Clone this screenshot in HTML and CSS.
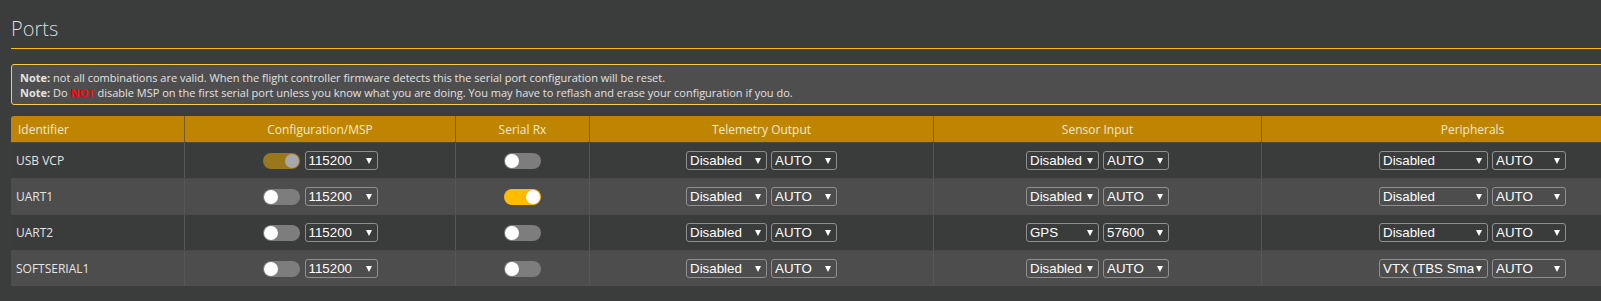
FILE: index.html
```html
<!doctype html>
<html lang="en">
<head>
  <meta charset="utf-8">
  <meta name="viewport" content="width=device-width, initial-scale=1">
  <title>Ports</title>
  <link rel="stylesheet" href="styles.css">
</head>
<body>
  <div class="tab">
    <div class="tabTitle">Ports</div>

    <div class="note">
      <p><b>Note:</b> not all combinations are valid. When the flight controller firmware detects this the serial port configuration will be reset.</p>
      <p><b>Note:</b> Do <span class="warn">NOT</span> disable MSP on the first serial port unless you know what you are doing. You may have to reflash and erase your configuration if you do.</p>
    </div>

    <div class="ports">
      <div class="row head">
        <div class="cell ident">Identifier</div>
        <div class="cell">Configuration/MSP</div>
        <div class="cell">Serial Rx</div>
        <div class="cell">Telemetry Output</div>
        <div class="cell">Sensor Input</div>
        <div class="cell">Peripherals</div>
      </div>

      <div class="row">
        <div class="cell ident">USB VCP</div>
        <div class="cell"><span class="toggle locked"></span><span class="select w73"><span class="val">115200</span><span class="arrow"></span></span></div>
        <div class="cell"><span class="toggle"></span></div>
        <div class="cell"><span class="select w81"><span class="val">Disabled</span><span class="arrow"></span></span><span class="select w66"><span class="val">AUTO</span><span class="arrow"></span></span></div>
        <div class="cell"><span class="select w73"><span class="val">Disabled</span><span class="arrow"></span></span><span class="select w66"><span class="val">AUTO</span><span class="arrow"></span></span></div>
        <div class="cell"><span class="select w109"><span class="val">Disabled</span><span class="arrow"></span></span><span class="select w74"><span class="val">AUTO</span><span class="arrow"></span></span></div>
      </div>

      <div class="row alt">
        <div class="cell ident">UART1</div>
        <div class="cell"><span class="toggle"></span><span class="select w73"><span class="val">115200</span><span class="arrow"></span></span></div>
        <div class="cell"><span class="toggle on"></span></div>
        <div class="cell"><span class="select w81"><span class="val">Disabled</span><span class="arrow"></span></span><span class="select w66"><span class="val">AUTO</span><span class="arrow"></span></span></div>
        <div class="cell"><span class="select w73"><span class="val">Disabled</span><span class="arrow"></span></span><span class="select w66"><span class="val">AUTO</span><span class="arrow"></span></span></div>
        <div class="cell"><span class="select w109"><span class="val">Disabled</span><span class="arrow"></span></span><span class="select w74"><span class="val">AUTO</span><span class="arrow"></span></span></div>
      </div>

      <div class="row">
        <div class="cell ident">UART2</div>
        <div class="cell"><span class="toggle"></span><span class="select w73"><span class="val">115200</span><span class="arrow"></span></span></div>
        <div class="cell"><span class="toggle"></span></div>
        <div class="cell"><span class="select w81"><span class="val">Disabled</span><span class="arrow"></span></span><span class="select w66"><span class="val">AUTO</span><span class="arrow"></span></span></div>
        <div class="cell"><span class="select w73"><span class="val">GPS</span><span class="arrow"></span></span><span class="select w66"><span class="val">57600</span><span class="arrow"></span></span></div>
        <div class="cell"><span class="select w109"><span class="val">Disabled</span><span class="arrow"></span></span><span class="select w74"><span class="val">AUTO</span><span class="arrow"></span></span></div>
      </div>

      <div class="row alt">
        <div class="cell ident">SOFTSERIAL1</div>
        <div class="cell"><span class="toggle"></span><span class="select w73"><span class="val">115200</span><span class="arrow"></span></span></div>
        <div class="cell"><span class="toggle"></span></div>
        <div class="cell"><span class="select w81"><span class="val">Disabled</span><span class="arrow"></span></span><span class="select w66"><span class="val">AUTO</span><span class="arrow"></span></span></div>
        <div class="cell"><span class="select w73"><span class="val">Disabled</span><span class="arrow"></span></span><span class="select w66"><span class="val">AUTO</span><span class="arrow"></span></span></div>
        <div class="cell"><span class="select w109"><span class="val">VTX (TBS SmartAudio)</span><span class="arrow"></span></span><span class="select w74"><span class="val">AUTO</span><span class="arrow"></span></span></div>
      </div>
    </div>
  </div>
</body>
</html>
```

FILE: styles.css
```css
html{
  height: 100%;
}

body{
  margin: 0;
  height: 100%;
  background-color: #3b3c3c;
  font-family: "Open Sans", "DejaVu Sans", sans-serif;
  color: #e4e4e4;
  overflow: hidden;
}

.tab{
  width: 1672px;
  padding: 15px 11px 0 11px;
}

.tabTitle{
  font-size: 20px;
  font-weight: 300;
  line-height: 28px;
  color: #dcdcdc;
  padding-bottom: 5px;
  border-bottom: 1px solid #ffbb00;
}

.note{
  margin-top: 15px;
  padding: 5px 8px 4px 8px;
  background-color: #4e4e4e;
  border: 1px solid #f3cd4b;
  border-radius: 3px;
  font-size: 11px;
  line-height: 15px;
  color: #e2e2e2;
}

.note p{
  margin: 0;
}

.note b{
  font-weight: 700;
}

.warn{
  color: #ff0000;
  font-weight: 700;
}

.ports{
  margin-top: 11px;
}

.row{
  display: grid;
  grid-template-columns: 173px 271px 134px 344px 328px 1fr;
  height: 36px;
  background-color: #3a3b3b;
  border-top: 1px solid #4a4a4a;
  box-sizing: border-box;
}

.row.alt{
  background-color: #4d4d4d;
}

.row.head{
  height: 26px;
  background-color: #bf8500;
  border-top: none;
  border-radius: 3px 3px 0 0;
  color: #f3e8cc;
}

.cell{
  display: flex;
  align-items: center;
  justify-content: center;
  gap: 4px;
  font-size: 12px;
  border-left: 1px solid #575757;
  white-space: nowrap;
}

.head .cell{
  border-left-color: #6e5a2c;
}

.cell.ident{
  justify-content: flex-start;
  padding-left: 5px;
  border-left: none;
}

.head .cell.ident{
  padding-left: 7px;
}

.toggle{
  position: relative;
  display: inline-block;
  width: 37px;
  height: 16px;
  border-radius: 8px;
  background-color: #7d7d7d;
  margin-right: 1px;
}

.toggle::after{
  content: "";
  position: absolute;
  top: 1px;
  left: 1px;
  width: 14px;
  height: 14px;
  border-radius: 50%;
  background-color: #ffffff;
}

.toggle.on{
  background-color: #ffbb00;
}

.toggle.on::after{
  left: 22px;
}

.toggle.locked{
  background-color: #9a761c;
}

.toggle.locked::after{
  left: 22px;
  background-color: #a8a8a8;
}

.select{
  display: inline-flex;
  align-items: center;
  box-sizing: border-box;
  height: 19px;
  padding: 0 5px 0 3px;
  border: 1px solid #8f8f8f;
  border-radius: 3px;
  font-family: "Liberation Sans", Arial, sans-serif;
  font-size: 13.333px;
  color: #ffffff;
}

.select .val{
  flex: 1;
  overflow: hidden;
  white-space: nowrap;
}

.select .arrow{
  width: 0;
  height: 0;
  margin-left: 2px;
  border-left: 3.5px solid transparent;
  border-right: 3.5px solid transparent;
  border-top: 6px solid #ffffff;
}

.w66{ width: 66px; }
.w73{ width: 73px; }
.w74{ width: 74px; }
.w81{ width: 81px; }
.w109{ width: 109px; }
```
